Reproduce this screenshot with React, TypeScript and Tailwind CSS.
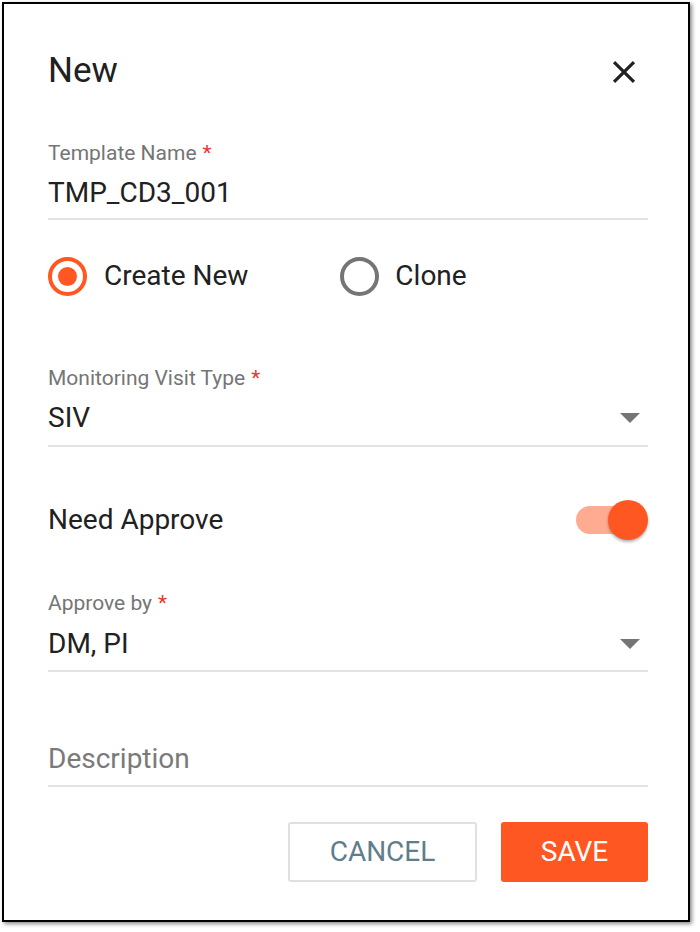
import React from 'react';

const font = { fontFamily: 'Roboto, "Noto Sans", sans-serif' };

function Label({ text }: { text: string }) {
  return (
    <div className="h-[24px] flex items-center text-[21px] text-[#757575]">
      {text}
      <span className="ml-[6px] text-[#e53935]">*</span>
    </div>
  );
}

function Arrow() {
  return (
    <svg width="20" height="10" viewBox="0 0 20 10" className="mr-[8px]">
      <path d="M0 0h20L10 10z" fill="#757575" />
    </svg>
  );
}

function Line() {
  return <div className="h-[2px] bg-[#e2e2e2]" />;
}

export default function App() {
  return (
    <div className="w-[700px] h-[932px] bg-white p-[2px]" style={font}>
      <div className="w-[688px] h-[920px] bg-white border-2 border-black shadow-[2px_2px_4px_rgba(0,0,0,0.45)] pl-[44px] pr-[40px] pt-[44px]">
        {/* Header */}
        <div className="h-[48px] flex items-center justify-between">
          <h2 className="text-[35px] text-[#212121] -mt-[2px]">New</h2>
          <svg width="38" height="38" viewBox="0 0 24 24" className="mr-[5px]">
            <path
              d="M19 6.41L17.59 5 12 10.59 6.41 5 5 6.41 10.59 12 5 17.59 6.41 19 12 13.41 17.59 19 19 17.59 13.41 12z"
              fill="#212121"
            />
          </svg>
        </div>

        {/* Template name */}
        <div className="mt-[46px]">
          <Label text="Template Name" />
          <div className="mt-[9px] h-[36px] flex items-center text-[28px] text-[#212121]">TMP_CD3_001</div>
          <div className="mt-[7px]">
            <Line />
          </div>
        </div>

        {/* Radios */}
        <div className="mt-[36px] h-[40px] flex items-center">
          <div className="flex items-center">
            <div className="w-[39px] h-[39px] rounded-full border-4 border-[#ff5722] flex items-center justify-center">
              <div className="w-[19px] h-[19px] rounded-full bg-[#ff5722]" />
            </div>
            <span className="ml-[17px] text-[28px] text-[#212121]">Create New</span>
          </div>
          <div className="flex items-center ml-[92px]">
            <div className="w-[39px] h-[39px] rounded-full border-4 border-[#757575]" />
            <span className="ml-[16px] text-[28px] text-[#212121]">Clone</span>
          </div>
        </div>

        {/* Monitoring visit type */}
        <div className="mt-[71px]">
          <Label text="Monitoring Visit Type" />
          <div className="mt-[9px] h-[36px] flex items-center justify-between text-[28px] text-[#212121]">
            SIV
            <Arrow />
          </div>
          <div className="mt-[9px]">
            <Line />
          </div>
        </div>

        {/* Need approve */}
        <div className="mt-[53px] h-[40px] flex items-center justify-between">
          <span className="text-[28px] text-[#212121]">Need Approve</span>
          <div className="relative w-[72px] h-[40px] flex items-center">
            <div className="w-[56px] h-[28px] rounded-full bg-[#ffab91]" />
            <div className="absolute right-0 top-0 w-[40px] h-[40px] rounded-full bg-[#ff5722] shadow-[0_2px_3px_rgba(0,0,0,0.3)]" />
          </div>
        </div>

        {/* Approve by */}
        <div className="mt-[52px]">
          <Label text="Approve by" />
          <div className="mt-[10px] h-[36px] flex items-center justify-between text-[28px] text-[#212121]">
            DM, PI
            <Arrow />
          </div>
          <div className="mt-[8px]">
            <Line />
          </div>
        </div>

        {/* Description */}
        <div className="mt-[69px] h-[36px] flex items-center text-[28px] text-[#7a7a7a]">Description</div>
        <div className="mt-[8px]">
          <Line />
        </div>

        {/* Actions */}
        <div className="mt-[35px] flex justify-end gap-[24px]">
          <button className="w-[189px] h-[60px] rounded-[3px] border-2 border-[#e0e0e0] bg-white text-[28px] text-[#607d8b]">
            CANCEL
          </button>
          <button className="w-[147px] h-[60px] rounded-[3px] bg-[#ff5722] text-[28px] text-white">
            SAVE
          </button>
        </div>
      </div>
    </div>
  );
}
